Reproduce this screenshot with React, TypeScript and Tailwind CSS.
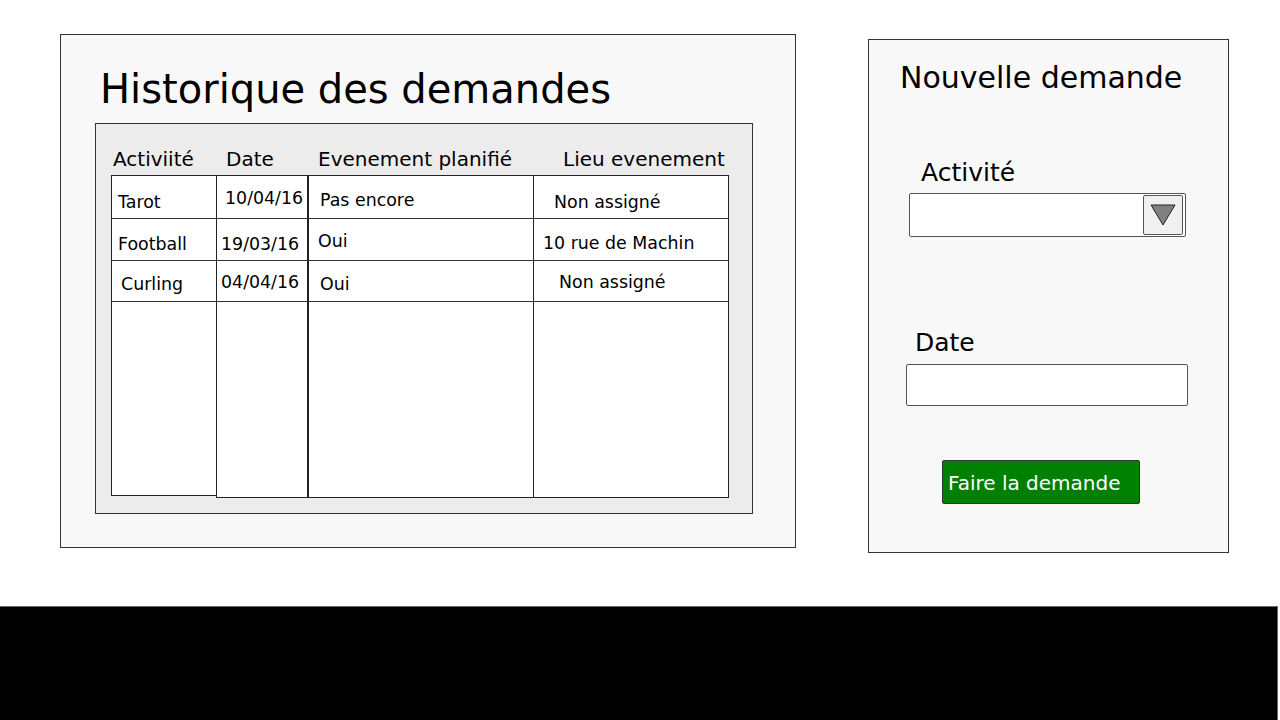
import React from "react";

type Cell = { t: string; pl: string; pt: string };

const rowsCol1: Cell[] = [
  { t: "Tarot", pl: "pl-[6px]", pt: "pt-[18px]" },
  { t: "Football", pl: "pl-[6px]", pt: "pt-[17px]" },
  { t: "Curling", pl: "pl-[9px]", pt: "pt-[15px]" },
];
const rowsCol2: Cell[] = [
  { t: "10/04/16", pl: "pl-[8px]", pt: "pt-[14px]" },
  { t: "19/03/16", pl: "pl-[4px]", pt: "pt-[17px]" },
  { t: "04/04/16", pl: "pl-[4px]", pt: "pt-[13px]" },
];
const rowsCol3: Cell[] = [
  { t: "Pas encore", pl: "pl-[11px]", pt: "pt-[16px]" },
  { t: "Oui", pl: "pl-[9px]", pt: "pt-[14px]" },
  { t: "Oui", pl: "pl-[11px]", pt: "pt-[15px]" },
];
const rowsCol4: Cell[] = [
  { t: "Non assigné", pl: "pl-[20px]", pt: "pt-[18px]" },
  { t: "10 rue de Machin", pl: "pl-[9px]", pt: "pt-[16px]" },
  { t: "Non assigné", pl: "pl-[25px]", pt: "pt-[13px]" },
];

const rowHeights = ["h-[43px]", "h-[42px]", "h-[41px]"];

function Column({ cells, className }: { cells: Cell[]; className: string }) {
  return (
    <div className={"flex flex-col border border-[#222] bg-white " + className}>
      {cells.map((c, i) => (
        <div
          key={i}
          className={
            "flex shrink-0 items-start border-b border-[#333] whitespace-nowrap text-[17.4px] leading-none text-black " +
            rowHeights[i] +
            " " +
            c.pl +
            " " +
            c.pt
          }
        >
          {c.t}
        </div>
      ))}
      <div className="flex-1" />
    </div>
  );
}

export default function App() {
  return (
    <div
      className="flex h-[720px] w-[1280px] flex-col bg-white"
      style={{ fontFamily: '"DejaVu Sans", sans-serif' }}
    >
      <div className="flex h-[606px] shrink-0 items-start">
        {/* Left panel */}
        <div className="ml-[60px] mt-[34px] flex h-[514px] w-[736px] flex-col border border-[#333] bg-[#f8f8f8]">
          <div className="ml-[39px] mt-[34px] whitespace-nowrap text-[40px] leading-none text-black">
            Historique des demandes
          </div>
          <div className="ml-[34px] mt-[14px] flex h-[391px] w-[658px] flex-col border border-[#333] bg-[#ececec]">
            <div className="mt-[25px] flex whitespace-nowrap text-[20px] leading-none text-black">
              <div className="w-[130px] pl-[17px]">Activiité</div>
              <div className="w-[92px]">Date</div>
              <div className="w-[245px]">Evenement planifié</div>
              <div>Lieu evenement</div>
            </div>
            <div className="ml-[15px] mt-[6px] flex items-start">
              <Column cells={rowsCol1} className="h-[321px] w-[106px]" />
              <Column cells={rowsCol2} className="-ml-px h-[323px] w-[92px]" />
              <Column cells={rowsCol3} className="h-[323px] w-[226px]" />
              <Column cells={rowsCol4} className="-ml-px h-[323px] w-[196px]" />
            </div>
          </div>
        </div>

        {/* Right panel */}
        <div className="ml-[72px] mt-[39px] flex h-[514px] w-[361px] flex-col border border-[#333] bg-[#f8f8f8]">
          <div className="ml-[31px] mt-[23px] whitespace-nowrap text-[30px] leading-none text-black">
            Nouvelle demande
          </div>
          <div className="ml-[52px] mt-[67px] text-[25px] leading-none text-black">Activité</div>
          <div className="ml-[40px] mt-[8px] flex h-[44px] w-[277px] items-center justify-end rounded-[2px] border border-[#555] bg-white pr-[2px]">
            <div className="flex h-[40px] w-[40px] items-center justify-center rounded-[2px] border border-[#555] bg-[#f0f0f0]">
              <svg width="28" height="26" viewBox="0 0 28 26">
                <polygon points="2,3 26,3 14,23" fill="#808080" stroke="#222" strokeWidth="1" />
              </svg>
            </div>
          </div>
          <div className="ml-[46px] mt-[93px] text-[25px] leading-none text-black">Date</div>
          <div className="ml-[37px] mt-[9px] h-[42px] w-[282px] rounded-[2px] border border-[#555] bg-white" />
          <div className="ml-[73px] mt-[54px] flex h-[44px] w-[198px] items-center rounded-[2px] border border-[#333] bg-[#008000] pl-[5px] pt-[1px]">
            <span className="whitespace-nowrap text-[20px] leading-none text-white">Faire la demande</span>
          </div>
        </div>
      </div>
      <div className="w-[1278px] flex-1 border-r border-t border-[#666] bg-black" />
    </div>
  );
}
